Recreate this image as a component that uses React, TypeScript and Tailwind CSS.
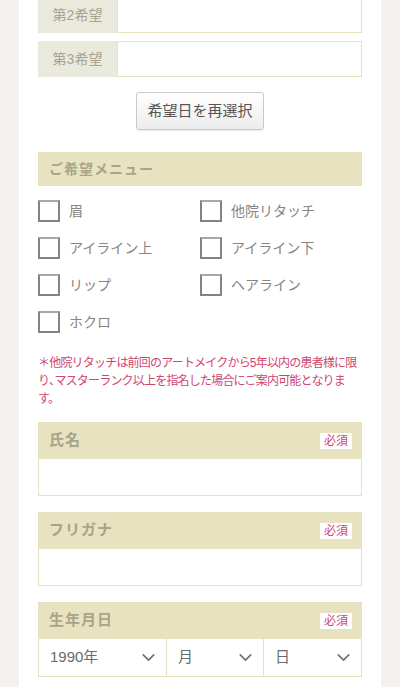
import { ChevronDown } from "lucide-react";

const FONT = { fontFamily: '"Liberation Sans", "Noto Sans CJK JP", sans-serif' };

const menus = [
  ["眉", "他院リタッチ"],
  ["アイライン上", "アイライン下"],
  ["リップ", "ヘアライン"],
  ["ホクロ", null],
];

function WishRow({ label, className = "" }: { label: string; className?: string }) {
  return (
    <div className={`flex h-[36px] ${className}`}>
      <div className="w-[79px] bg-[#e9e9dc] text-[14px] text-[#aaa28f] flex items-center justify-center">
        {label}
      </div>
      <div className="flex-1 bg-white border border-[#e8e2bc]" />
    </div>
  );
}

function Checkbox({ label }: { label: string }) {
  return (
    <label className="flex items-center gap-[9px] h-[22px]">
      <span className="w-[22px] h-[22px] border-2 border-[#838383] border-t-[#a8a8a8] bg-white shrink-0" />
      <span className="text-[14px] text-[#858585]">{label}</span>
    </label>
  );
}

function FieldHead({ title }: { title: string }) {
  return (
    <div className="h-[37px] bg-[#e7e3c1] flex items-center justify-between pl-[11px] pr-[10px]">
      <span className="text-[15px] font-bold text-[#a9a38a] tracking-[1px]">{title}</span>
      <span className="bg-white h-[16px] w-[32px] flex items-center justify-center text-[12px] text-[#cf4670]">
        必須
      </span>
    </div>
  );
}

function DateSelect({ value, className = "" }: { value: string; className?: string }) {
  return (
    <div className={`flex items-center justify-between pl-[11px] pr-[7px] ${className}`}>
      <span className="text-[15px] text-[#6b6b6b]">{value}</span>
      <ChevronDown size={21} strokeWidth={1.8} className="text-[#6e6e6e]" />
    </div>
  );
}

export default function App() {
  return (
    <div className="min-h-screen bg-[#f3f2ee] px-[19px]" style={FONT}>
      <div className="min-h-[687px] bg-white px-[19px] pb-[20px] overflow-hidden">
        <WishRow label="第2希望" className="-mt-[3px]" />
        <WishRow label="第3希望" className="mt-[8px]" />

        <div className="flex justify-center mt-[15px]">
          <button className="w-[128px] h-[38px] rounded-[3px] border border-[#c8c8c8] bg-gradient-to-b from-white to-[#ececec] text-[15px] text-[#555] shadow-[0_1px_1px_rgba(0,0,0,0.08)]">
            希望日を再選択
          </button>
        </div>

        <div className="mt-[22px] h-[34px] bg-[#e7e3c1] flex items-center pl-[11px] text-[14px] font-bold text-[#a9a38a] tracking-[1px]">
          ご希望メニュー
        </div>

        <div className="mt-[14px] grid grid-cols-2 gap-y-[15px]">
          {menus.map(([a, b]) => (
            <>
              <Checkbox key={a} label={a as string} />
              {b ? <Checkbox key={b} label={b} /> : <div key="empty" />}
            </>
          ))}
        </div>

        <p className="mt-[21px] text-[12px] leading-[18px] tracking-[-0.8px] text-[#cf4670]">
          ＊他院リタッチは前回のアートメイクから5年以内の患者様に限り､マスターランク以上を指名した場合にご案内可能となります。
        </p>

        <div className="mt-[14px]">
          <FieldHead title="氏名" />
          <div className="h-[37px] border border-t-0 border-[#e8e2bc] bg-white" />
        </div>

        <div className="mt-[16px]">
          <FieldHead title="フリガナ" />
          <div className="h-[37px] border border-t-0 border-[#e8e2bc] bg-white" />
        </div>

        <div className="mt-[16px]">
          <FieldHead title="生年月日" />
          <div className="h-[38px] border border-t-0 border-[#e8e2bc] bg-white grid grid-cols-[128px_97px_1fr]">
            <DateSelect value="1990年" className="border-r border-[#e8e2bc]" />
            <DateSelect value="月" className="border-r border-[#e8e2bc]" />
            <DateSelect value="日" />
          </div>
        </div>
      </div>
    </div>
  );
}
